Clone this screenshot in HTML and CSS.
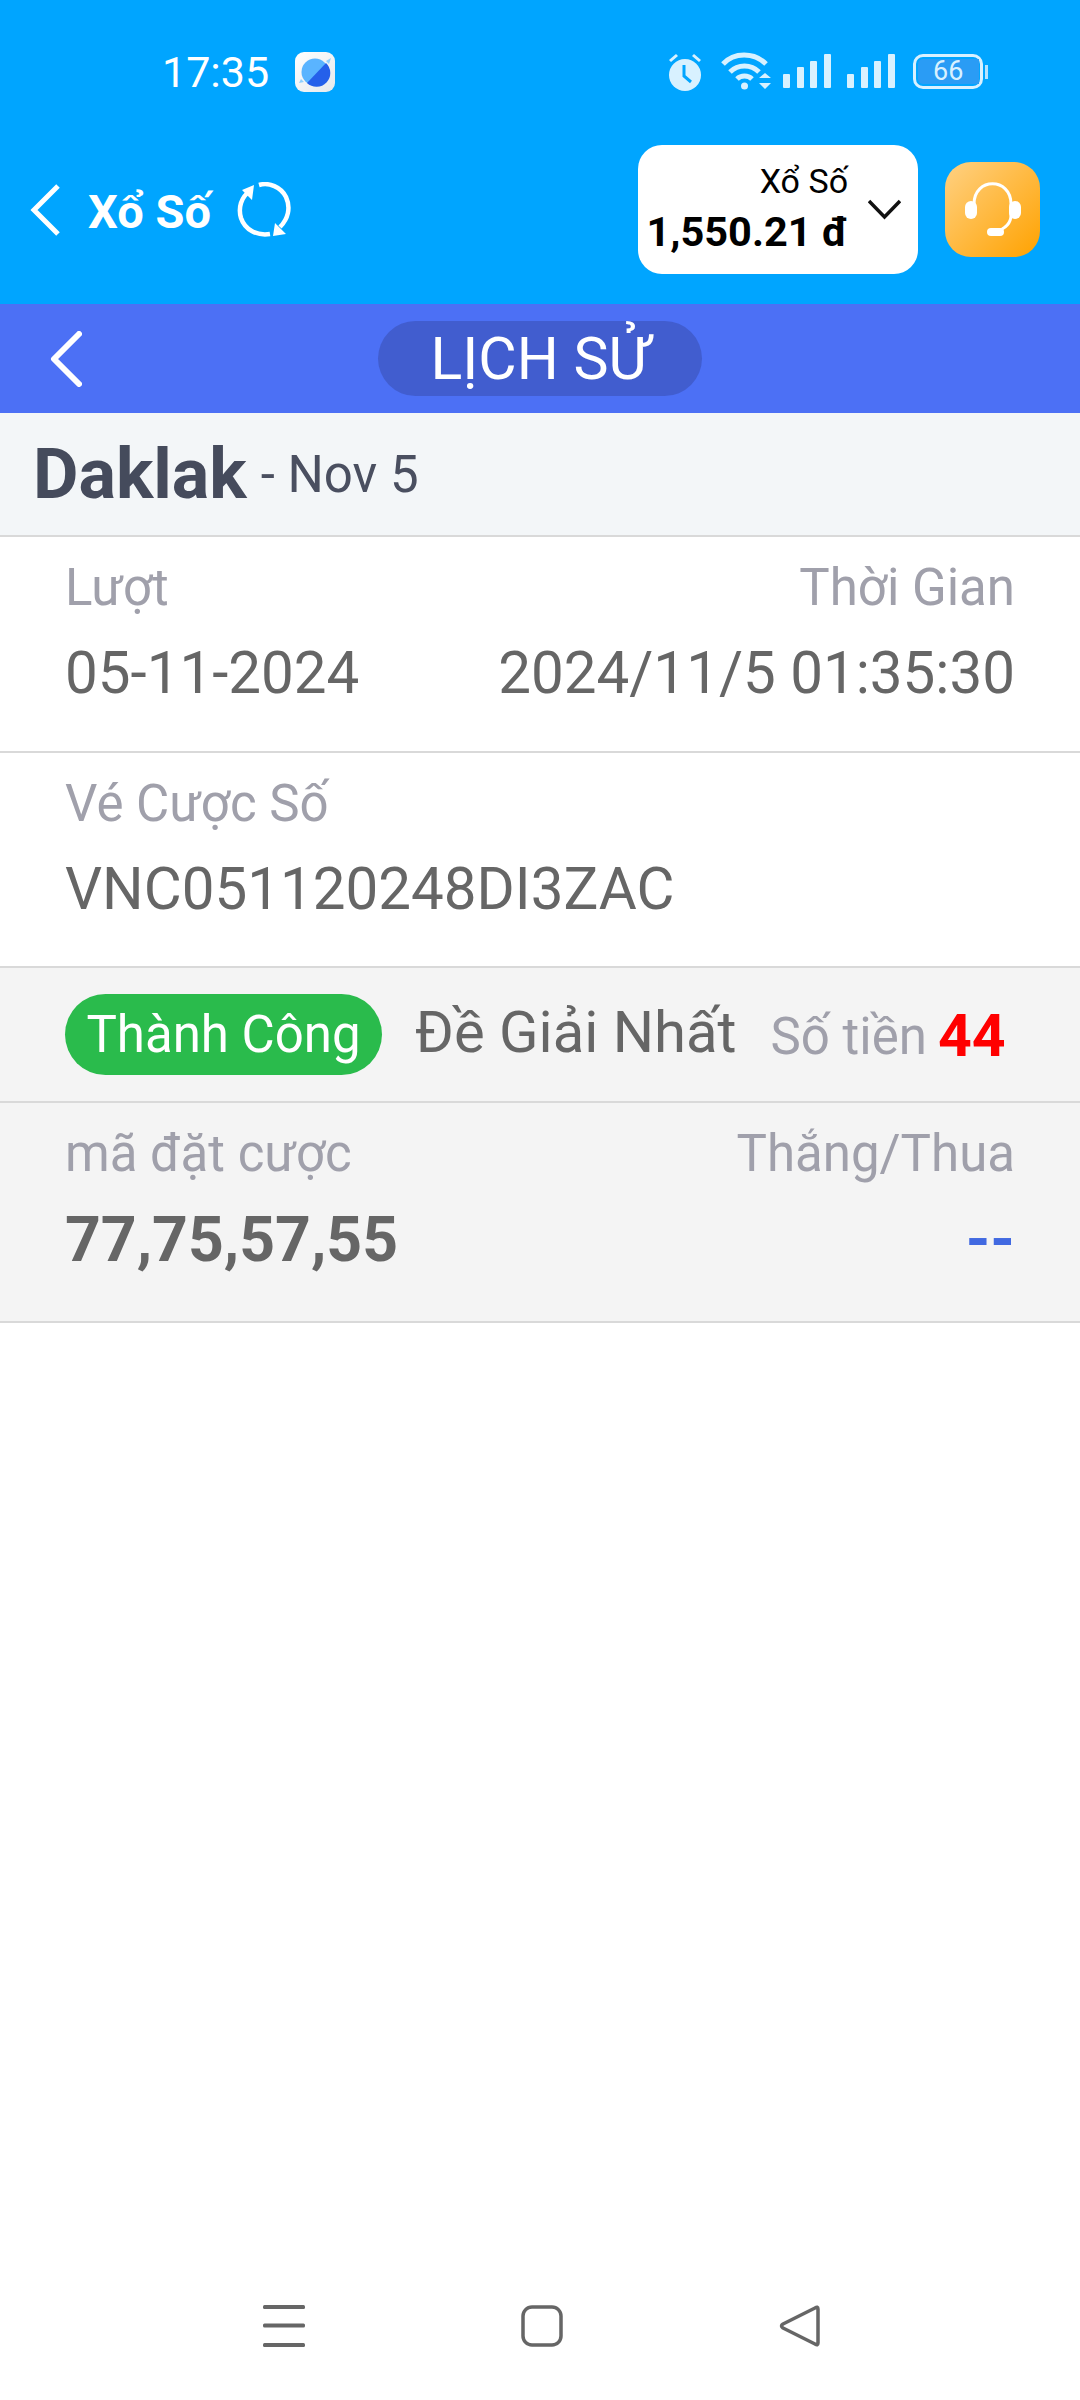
FILE: index.html
```html
<!DOCTYPE html>
<html lang="vi">
<head>
  <meta charset="UTF-8">
  <meta name="viewport" content="width=device-width, initial-scale=1.0">
  <title>Lịch sử</title>
  <link rel="stylesheet" href="styles.css">
</head>
<body>

  <div class="top">
    <!-- Status bar -->
    <div class="status">
      <span class="time">17:35</span>
      <svg class="planet" width="40" height="40" viewBox="0 0 40 40">
        <defs>
          <linearGradient id="planetBg" x1="0" y1="0" x2="1" y2="1">
            <stop offset="0" stop-color="#ffffff"/>
            <stop offset="1" stop-color="#e6e9ec"/>
          </linearGradient>
        </defs>
        <rect width="40" height="40" rx="9" fill="url(#planetBg)"/>
        <circle cx="20" cy="20" r="13.5" fill="#5ab4ff"/>
        <path d="M31 11 A13.5 13.5 0 0 1 12 31 Z" fill="#2560ea"/>
        <path d="M6 27 L4 31 L9 30 M31 9 L36 6 L34 12" fill="#8fd0ff"/>
      </svg>
      <div class="status-right">
        <svg width="36" height="40" viewBox="0 0 36 40" fill="#d8f1ff">
          <path d="M2 8 L9 2 L11 4 L4 10 Z M34 8 L27 2 L25 4 L32 10 Z"/>
          <circle cx="18" cy="23" r="16"/>
          <path d="M17 13 V24 L24 30" fill="none" stroke="#00a5ff" stroke-width="3"/>
        </svg>
        <svg class="wifi" width="50" height="40" viewBox="0 0 50 40" fill="none" stroke="#d8f1ff" stroke-width="5">
          <path d="M2 12 C13 0 33 0 45 12"/>
          <path d="M9 20 C17 12 30 12 38 20"/>
          <path d="M16 27 C20 23 27 23 31 27"/>
          <circle cx="23.500" cy="34" r="3.500" fill="#d8f1ff" stroke="none"/>
          <path d="M38 26 L44 21 L50 26 Z M38 31 H50 L44 37 Z" fill="#d8f1ff" stroke="none"/>
        </svg>
        <svg class="bars" width="48" height="34" viewBox="0 0 48 34" fill="#d8f1ff">
          <rect x="0" y="20" width="7" height="14" rx="1"/>
          <rect x="14" y="13" width="7" height="21" rx="1"/>
          <rect x="27" y="7" width="7" height="27" rx="1"/>
          <rect x="41" y="0" width="7" height="34" rx="1"/>
        </svg>
        <svg class="bars" width="48" height="34" viewBox="0 0 48 34" fill="#d8f1ff">
          <rect x="0" y="20" width="7" height="14" rx="1"/>
          <rect x="14" y="13" width="7" height="21" rx="1"/>
          <rect x="27" y="7" width="7" height="27" rx="1"/>
          <rect x="41" y="0" width="7" height="34" rx="1"/>
        </svg>
        <div class="battery"><span class="battery-level">66</span></div>
        <span class="battery-nub"></span>
      </div>
    </div>

    <!-- App header -->
    <div class="app-head">
      <svg class="head-back" width="30" height="52" viewBox="0 0 30 52" fill="none" stroke="#fff" stroke-width="5">
        <path d="M28 2 L4 26 L28 50"/>
      </svg>
      <span class="head-title">Xổ Số</span>
      <svg class="refresh" width="54" height="56" viewBox="0 0 54 56" fill="none" stroke="#fff" stroke-width="4.500">
        <path d="M13 9 C4 15 1 26 4 36 C8 48 20 54 33 52"/>
        <path d="M22 3 C32 0 44 5 49 15 C54 26 51 37 43 45"/>
        <path d="M5 8 L17 3 L15 18 Z M49 52 L36 54 L38 41 Z" fill="#fff" stroke="none"/>
      </svg>
      <div class="wallet">
        <div class="wallet-text">
          <span class="wallet-name">Xổ Số</span>
          <span class="wallet-amount">1,550.21 đ</span>
        </div>
        <svg width="33" height="21" viewBox="0 0 33 21" fill="none" stroke="#111" stroke-width="3.500">
          <path d="M1 2 L16.500 18 L32 2"/>
        </svg>
      </div>
      <div class="support">
        <svg width="56" height="56" viewBox="0 0 56 56" fill="none" stroke="#fff" stroke-width="3">
          <path d="M9 22 C9 -5 46 -5 46 22 V33 C46 42 40 47 30 50"/>
          <rect x="0" y="19" width="12" height="18" rx="6" fill="#fff" stroke="none"/>
          <rect x="44" y="19" width="12" height="18" rx="6" fill="#fff" stroke="none"/>
          <rect x="22" y="46" width="17" height="8" rx="4" fill="#fff" stroke="none"/>
        </svg>
      </div>
    </div>
  </div>

  <!-- Page title bar -->
  <div class="nav-bar">
    <svg width="32" height="56" viewBox="0 0 32 56" fill="none" stroke="#fff" stroke-width="6" stroke-linecap="round" stroke-linejoin="round">
      <path d="M29 3 L4 28 L29 53"/>
    </svg>
    <div class="nav-pill">LỊCH SỬ</div>
  </div>

  <div class="main">
    <div class="title-row">
      <span class="lottery">Daklak</span>
      <span class="lottery-date">- Nov 5</span>
    </div>

    <div class="row row-white">
      <div class="pair">
        <span class="label">Lượt</span>
        <span class="value">05-11-2024</span>
      </div>
      <div class="pair pair-right">
        <span class="label">Thời Gian</span>
        <span class="value">2024/11/5 01:35:30</span>
      </div>
    </div>

    <div class="row row-white row-short">
      <div class="pair">
        <span class="label">Vé Cược Số</span>
        <span class="value">VNC051120248DI3ZAC</span>
      </div>
    </div>

    <div class="status-row">
      <span class="badge">Thành Công</span>
      <span class="play-name">Đề Giải Nhất</span>
      <span class="money-label">Số tiền</span>
      <span class="money">44</span>
    </div>

    <div class="row row-gray">
      <div class="pair">
        <span class="label">mã đặt cược</span>
        <span class="value value-bold">77,75,57,55</span>
      </div>
      <div class="pair pair-right">
        <span class="label">Thắng/Thua</span>
        <span class="value value-bold value-blue">--</span>
      </div>
    </div>
  </div>

  <!-- Android buttons -->
  <div class="soft-keys">
    <svg width="42" height="42" viewBox="0 0 42 42" fill="#666">
      <rect y="0" width="42" height="4" rx="1.500"/>
      <rect y="18.500" width="42" height="4" rx="1.500"/>
      <rect y="38" width="42" height="4" rx="1.500"/>
    </svg>
    <svg width="42" height="42" viewBox="0 0 42 42" fill="none" stroke="#666" stroke-width="3.500">
      <rect x="2" y="2" width="38" height="38" rx="9"/>
    </svg>
    <svg width="42" height="42" viewBox="0 0 42 42" fill="none" stroke="#666" stroke-width="3.500" stroke-linejoin="round">
      <path d="M39 4 Q39 1 36 3 L4 19 Q1 21 4 23 L36 39 Q39 41 39 38 Z"/>
    </svg>
  </div>

</body>
</html>
```

FILE: styles.css
```css
body {
  font-family: Roboto, "Liberation Sans", sans-serif;
  background-color: #fff;
  margin: 0;
  padding: 0;
  width: 1080px;
  height: 2400px;
  display: flex;
  flex-direction: column;
}

.top {
  background-color: #00a5ff;
  height: 304px;
  color: #fff;
}

.status {
  height: 110px;
  padding: 52px 0 0 162px;
  box-sizing: border-box;
  display: flex;
  align-items: flex-start;
}

.time {
  font-size: 43px;
  line-height: 40px;
  width: 133px;
}

.status-right {
  margin-left: 332px;
  display: flex;
  align-items: center;
  height: 40px;
}

.wifi {
  margin-left: 18px;
}

.bars {
  margin-left: 12px;
  align-self: flex-end;
  margin-bottom: 4px;
}

.bars + .bars {
  margin-left: 16px;
}

.battery {
  margin-left: 18px;
  margin-bottom: 1px;
  width: 70px;
  height: 35px;
  border: 3px solid #d8f1ff;
  border-radius: 10px;
  box-sizing: border-box;
  padding: 2px;
}

.battery-level {
  display: block;
  width: 46px;
  height: 25px;
  background-color: #2a9cf5;
  border-radius: 5px 0 0 5px;
  padding-left: 15px;
  color: #d8f1ff;
  font-size: 27px;
  line-height: 25px;
}

.battery-nub {
  width: 3px;
  height: 14px;
  margin-left: 2px;
  background-color: #b5e3ff;
}

.app-head {
  height: 194px;
  display: flex;
  align-items: center;
  padding-left: 30px;
  box-sizing: border-box;
}

.head-back {
  margin-top: 6px;
}

.head-title {
  font-size: 47px;
  font-weight: bold;
  margin-left: 28px;
  margin-top: 8px;
}

.refresh {
  margin-left: 26px;
  margin-top: 5px;
}

.wallet {
  margin-left: 347px;
  margin-top: 5px;
  width: 280px;
  height: 129px;
  background-color: #fff;
  border-radius: 24px;
  color: #000;
  display: flex;
  align-items: center;
  box-sizing: border-box;
  padding-left: 8px;
}

.wallet svg {
  margin-left: 20px;
}

.wallet-text {
  display: flex;
  flex-direction: column;
  align-items: flex-end;
  width: 202px;
  flex-shrink: 0;
}

.wallet-name {
  font-size: 34px;
  line-height: 44px;
}

.wallet-amount {
  font-size: 41.500px;
  font-weight: bold;
  line-height: 58px;
  white-space: nowrap;
}

.support {
  margin-left: 27px;
  margin-top: 5px;
  width: 95px;
  height: 95px;
  border-radius: 26px;
  background: linear-gradient(135deg, #ffd183, #ffa200);
  display: flex;
  align-items: center;
  justify-content: center;
}

.nav-bar {
  background-color: #4c70f5;
  height: 109px;
  display: grid;
  align-items: center;
  padding-left: 50px;
  box-sizing: border-box;
  grid-template-columns: 328px auto;
}

.nav-pill {
  width: 324px;
  height: 75px;
  border-radius: 38px;
  background-color: #415dcf;
  color: #fff;
  font-size: 59px;
  line-height: 75px;
  text-align: center;
}

.main {
  flex: 1;
}

.title-row {
  height: 124px;
  box-sizing: border-box;
  background-color: #f3f6f8;
  border-bottom: 2px solid #d9d9d9;
  padding-left: 33px;
  display: flex;
  align-items: center;
  gap: 14px;
}

.lottery {
  font-size: 70px;
  font-weight: bold;
  color: #454b5c;
}

.lottery-date {
  font-size: 51px;
  color: #4a4f60;
}

.row {
  box-sizing: border-box;
  display: flex;
  justify-content: space-between;
  padding: 23px 65px 0;
  border-bottom: 2px solid #d9d9d9;
}

.row-white {
  height: 216px;
  background-color: #fff;
}

.row-short {
  height: 215px;
}

.row-gray {
  height: 220px;
  background-color: #f4f4f4;
}

.pair {
  display: flex;
  flex-direction: column;
}

.pair-right {
  align-items: flex-end;
}

.label {
  font-size: 51px;
  line-height: 56px;
  color: #a0a0ab;
}

.value {
  font-size: 58.300px;
  line-height: 68px;
  color: #666;
  margin-top: 23px;
}

.value-bold {
  font-size: 62.500px;
  font-weight: bold;
  margin-top: 24px;
}

.value-blue {
  color: #4169e1;
}

.status-row {
  height: 135px;
  box-sizing: border-box;
  background-color: #f4f4f4;
  border-bottom: 2px solid #d9d9d9;
  padding-left: 65px;
  display: flex;
  align-items: center;
}

.badge {
  width: 317px;
  height: 81px;
  border-radius: 41px;
  background-color: #2abb4c;
  color: #fff;
  font-size: 51px;
  line-height: 81px;
  text-align: center;
}

.play-name {
  font-size: 58px;
  color: #666;
  margin-left: 33px;
  margin-top: -6px;
}

.money-label {
  font-size: 51px;
  color: #a0a0ab;
  margin-left: 34px;
  margin-top: 4px;
}

.money {
  font-size: 59px;
  font-weight: bold;
  color: #f00;
  margin-left: 11px;
  margin-top: 2px;
}

.soft-keys {
  height: 95px;
  box-sizing: border-box;
  display: flex;
  align-items: flex-start;
  padding-left: 263px;
  gap: 216px;
}
```
